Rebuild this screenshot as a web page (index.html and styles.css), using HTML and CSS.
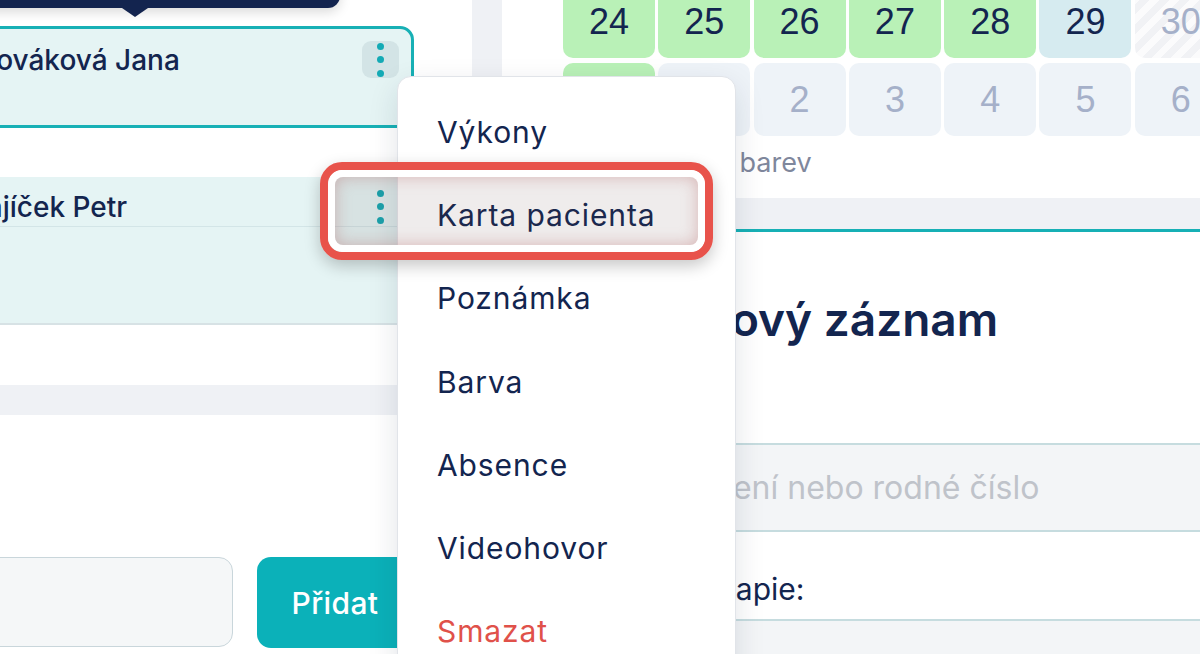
FILE: index.html
```html
<!DOCTYPE html>
<html lang="cs">
<head>
<meta charset="utf-8">
<title>Rozpis</title>
<link rel="stylesheet" href="styles.css">
</head>
<body>
<div class="app">
  <aside class="left">
    <section class="patients">
      <div class="card card-active">
        <div class="card-head">
          <span class="name">Nováková Jana</span>
          <button class="kebab kebab-bg"><span class="dot"></span><span class="dot"></span><span class="dot"></span></button>
        </div>
      </div>
      <div class="card card-second">
        <div class="card-head">
          <span class="name">Hájíček Petr</span>
          <button class="kebab"><span class="dot"></span><span class="dot"></span><span class="dot"></span></button>
        </div>
      </div>
    </section>
    <section class="add">
      <div class="add-input"></div>
      <button class="btn">Přidat</button>
    </section>
  </aside>
  <main class="right">
    <section class="calendar">
      <div class="grid">
        <div class="cell green">24</div>
        <div class="cell green">25</div>
        <div class="cell green">26</div>
        <div class="cell green">27</div>
        <div class="cell green">28</div>
        <div class="cell today">29</div>
        <div class="cell striped">30</div>
        <div class="cell green">31</div>
        <div class="cell next">1</div>
        <div class="cell next">2</div>
        <div class="cell next">3</div>
        <div class="cell next">4</div>
        <div class="cell next">5</div>
        <div class="cell next">6</div>
      </div>
      <div class="legend">Legenda barev</div>
    </section>
    <section class="new-record">
      <h2 class="title">Nový záznam</h2>
      <div class="field field-search">Jméno, příjmení nebo rodné číslo</div>
      <div class="label">Terapie:</div>
      <div class="field"></div>
    </section>
  </main>
</div>

<div class="tooltip"></div>

<div class="menu">
  <ul class="menu-list">
    <li class="menu-item">Výkony</li>
    <li class="menu-item">Karta pacienta</li>
    <li class="menu-item">Poznámka</li>
    <li class="menu-item">Barva</li>
    <li class="menu-item">Absence</li>
    <li class="menu-item">Videohovor</li>
    <li class="menu-item danger">Smazat</li>
  </ul>
</div>

<div class="annot"><div class="annot-inner"></div></div>
</body>
</html>
```

FILE: styles.css
```css
* { box-sizing: border-box; margin: 0; padding: 0; }

html, body { width: 1200px; height: 654px; overflow: hidden; }

body {
  position: relative;
  background: #eff1f5;
  font-family: "Inter", "Noto Sans", sans-serif;
  color: #13254f;
}

.app {
  display: grid;
  grid-template-columns: 472px 1fr;
  column-gap: 30px;
  height: 654px;
}

/* ---------- left column ---------- */
.left {
  display: flex;
  flex-direction: column;
  gap: 30px;
  min-width: 0;
}

.patients {
  flex-shrink: 0;
  height: 385px;
  margin-left: -40px;
  padding: 26px 58px 0 0;
  background: #fff;
}

.card { background: #e5f4f4; }

.card-head {
  display: flex;
  align-items: center;
  justify-content: space-between;
}

.card-active {
  height: 102px;
  border: 3px solid #17b0b5;
  border-radius: 14px;
  padding: 12px 12px 0 12px;
}

.card-active .card-head { height: 37px; }

.card-second {
  margin-top: 49px;
  height: 148px;
  border-bottom: 2px solid #d7e2e5;
  border-radius: 0 14px 0 0;
}

.card-second .card-head {
  height: 50px;
  padding: 10px 15px 0 0;
  border-bottom: 1px solid #d3e5e7;
}

.card-second .name { margin-left: 6px; }

.name {
  font-size: 28px;
  font-weight: 500;
  white-space: nowrap;
}

.kebab {
  width: 37px;
  height: 37px;
  border: 0;
  border-radius: 9px;
  background: transparent;
  display: flex;
  flex-direction: column;
  align-items: center;
  justify-content: center;
  gap: 6.5px;
}

.kebab-bg { background: #d3e4e6; }

.dot {
  width: 7px;
  height: 7px;
  border-radius: 50%;
  background: #14aab5;
}

.add {
  flex: 1;
  margin-left: -40px;
  padding-top: 142px;
  background: #fff;
  display: flex;
  gap: 24px;
}

.add-input {
  width: 273px;
  height: 90px;
  border: 1.5px solid #c9d6db;
  border-radius: 14px;
  background: #f5f7f8;
}

.btn {
  width: 156px;
  height: 91px;
  border: 0;
  border-radius: 14px;
  background: #0bb1b9;
  color: #fff;
  font-family: "Inter", "Noto Sans", sans-serif;
  font-size: 30px;
  font-weight: 500;
  letter-spacing: 0.4px;
}

/* ---------- right column ---------- */
.right {
  display: flex;
  flex-direction: column;
  gap: 31px;
  min-width: 0;
}

.calendar {
  flex-shrink: 0;
  height: 198px;
  padding-left: 61px;
  background: #fff;
}

.grid {
  display: grid;
  grid-template-columns: repeat(7, 92px);
  grid-auto-rows: 73px;
  column-gap: 3.3px;
  row-gap: 5px;
  margin-top: -15px;
}

.cell {
  border-radius: 10px;
  display: flex;
  align-items: center;
  justify-content: center;
  font-family: "Liberation Sans", Arial, sans-serif;
  font-size: 36px;
  color: #13254f;
}

.green { background: #b9f1b7; }
.today { background: #d6ebf0; }
.next { background: #eef3f8; color: #a5b0c9; }
.striped {
  color: #a5b0c9;
  background: repeating-linear-gradient(135deg, #f1f2f5 0 7px, #fbfbfc 7px 14px);
}

.legend {
  margin: 10px 0 0 58px;
  font-size: 27px;
  line-height: 33px;
  color: #7f879c;
}

.new-record {
  flex: 1;
  background: #fff;
  border-top: 3px solid #17b0b5;
  padding-top: 59px;
}

.title {
  padding-left: 194px;
  font-size: 46px;
  font-weight: 600;
  line-height: 56px;
  color: #13254f;
}

.field {
  height: 89px;
  background: #f3f5f7;
  border-top: 2px solid #c6dcdf;
  border-bottom: 2px solid #c6dcdf;
}

.field-search {
  margin-top: 96px;
  padding-left: 34px;
  display: flex;
  align-items: center;
  font-size: 32px;
  color: #bfc3ca;
  white-space: nowrap;
}

.label {
  margin-top: 39px;
  padding-left: 188px;
  font-size: 30px;
  line-height: 36px;
  color: #13254f;
}

.label + .field { margin-top: 12px; }

/* ---------- overlays ---------- */
.tooltip {
  position: absolute;
  left: -20px;
  top: -40px;
  width: 360px;
  height: 48px;
  border-radius: 12px;
  background: #13244f;
  box-shadow: 0 4px 12px rgba(0, 0, 0, 0.15);
}

.tooltip::after {
  content: "";
  position: absolute;
  left: 142px;
  bottom: -9px;
  border-left: 13px solid transparent;
  border-right: 13px solid transparent;
  border-top: 9px solid #13244f;
}

.menu {
  position: absolute;
  left: 397px;
  top: 76px;
  width: 339px;
  height: 620px;
  background: #fff;
  border: 1px solid #e1e4e9;
  border-radius: 14px;
  box-shadow: 0 10px 30px rgba(16, 30, 60, 0.12);
}

.menu-list {
  list-style: none;
  padding-top: 13px;
}

.menu-item {
  height: 83.3px;
  display: flex;
  align-items: center;
  padding-left: 39px;
  font-size: 30px;
  font-weight: 400;
  letter-spacing: 0.9px;
  color: #13254f;
}

.menu-item.danger { color: #e0514a; }

.annot {
  position: absolute;
  left: 320px;
  top: 162px;
  width: 393px;
  height: 98px;
  border: 8px solid #e8534b;
  border-radius: 22px;
  box-shadow: 0 6px 16px rgba(0, 0, 0, 0.22);
}

.annot-inner {
  position: absolute;
  inset: 7px;
  border-radius: 8px;
  background: rgba(100, 70, 70, 0.1);
  box-shadow: 0 0 0 7px #fff, inset 0 0 16px rgba(180, 100, 100, 0.4);
}
```
